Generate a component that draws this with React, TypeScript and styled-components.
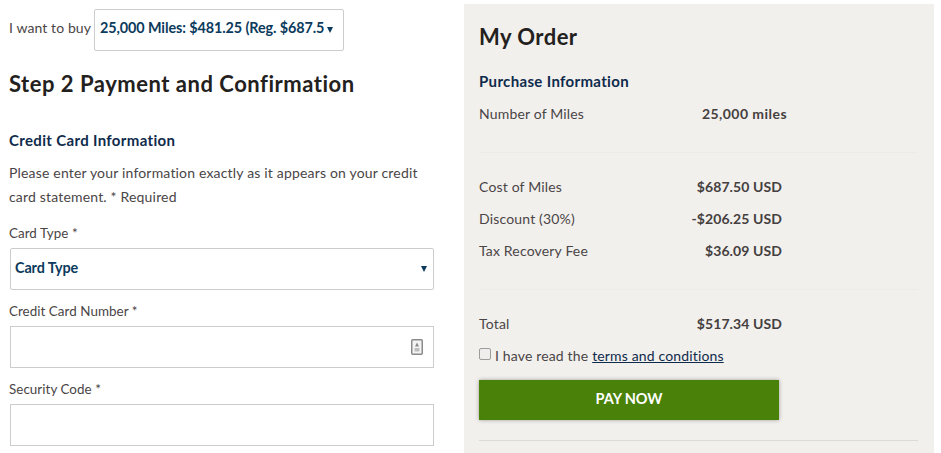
import React from "react";
import styled, { createGlobalStyle } from "styled-components";

const Global = createGlobalStyle`
  html, body { margin: 0; padding: 0; background: #fff; height: 453px; overflow: hidden; }
  body { font-family: Lato, "Open Sans", Arial, sans-serif; color: #4a4546; }
  * { box-sizing: border-box; }
`;

const Page = styled.div`
  display: flex;
  align-items: flex-start;
  width: 941px;
  height: 453px;
  overflow: hidden;
`;

const Left = styled.div`
  width: 464px;
  flex: none;
  padding: 9px 30px 0 9px;
`;

const BuyRow = styled.div`
  display: flex;
  align-items: center;
  gap: 3px;
  height: 42px;
  font-size: 14px;
  letter-spacing: 0.1px;
`;

const BuyLabel = styled.span`
  margin-bottom: 5px;
`;

const Arrow = styled.span`
  width: 0;
  height: 0;
  border-left: 3px solid transparent;
  border-right: 3px solid transparent;
  border-top: 6px solid #0b3a5c;
  flex: none;
`;

const SelectBox = styled.div<{ $full?: boolean }>`
  display: flex;
  align-items: ${(p) => (p.$full ? "center" : "flex-start")};
  justify-content: space-between;
  height: 42px;
  width: ${(p) => (p.$full ? "424px" : "250px")};
  margin-left: ${(p) => (p.$full ? "1px" : "0")};
  padding: ${(p) => (p.$full ? "0 6px 4px 4px" : "9px 10px 0 5px")};
  border: 1px solid #cccccc;
  border-radius: 2px;
  background: #fff;
  color: #0b3a5c;
  font-weight: 700;
  font-size: 14.4px;
  white-space: nowrap;
  overflow: hidden;
  ${Arrow} { margin-top: ${(p) => (p.$full ? "4px" : "8px")}; }
`;

const SelectText = styled.span`
  letter-spacing: -0.1px;
`;

const Heading = styled.h1`
  margin: 18px 0 0;
  font-size: 22px;
  line-height: 30px;
  font-weight: 700;
  color: #232020;
  letter-spacing: 0.52px;
`;

const SubHeading = styled.h2<{ $tight?: boolean }>`
  margin: ${(p) => (p.$tight ? "20px 0 0" : "31px 0 0")};
  font-size: 15px;
  line-height: 20px;
  font-weight: 700;
  color: #0f2b4c;
  letter-spacing: 0.34px;
`;

const Intro = styled.p`
  margin: 11px 0 0;
  font-size: 14px;
  line-height: 24px;
  letter-spacing: 0.18px;
`;

const Label = styled.div<{ $first?: boolean }>`
  margin-top: ${(p) => (p.$first ? "14px" : "11px")};
  height: 20px;
  font-size: 13.4px;
  line-height: 20px;
  letter-spacing: 0.05px;
`;

const FieldLabel = styled(Label)``;

const InputBox = styled.div`
  position: relative;
  height: 42px;
  width: 424px;
  margin: 5px 0 0 1px;
  border: 1px solid #cccccc;
  background: #fff;
`;

const SelectWrap = styled.div`
  margin-top: 5px;
`;

const CardIcon = styled.svg`
  position: absolute;
  right: 10px;
  top: 12px;
  width: 12px;
  height: 16px;
`;

const Panel = styled.div`
  width: 470px;
  height: 449px;
  margin-top: 4px;
  flex: none;
  background: #f2f0ed;
  padding: 19px 16px 0 15px;
`;

const PanelTitle = styled.h1`
  margin: 0;
  font-size: 22px;
  line-height: 28px;
  font-weight: 700;
  color: #232020;
  letter-spacing: 0.45px;
`;

const Row = styled.div<{ $wide?: boolean; $top?: number }>`
  display: flex;
  justify-content: space-between;
  align-items: center;
  width: ${(p) => (p.$wide ? "308px" : "303px")};
  height: 32px;
  font-size: 14px;
  letter-spacing: 0.17px;
  margin-top: ${(p) => p.$top ?? 0}px;
`;

const Value = styled.span<{ $loose?: boolean }>`
  font-weight: 700;
  color: #45403f;
  letter-spacing: ${(p) => (p.$loose ? "0.45px" : "0.1px")};
`;

const Divider = styled.hr<{ $strong?: boolean; $top: number }>`
  border: 0;
  height: 1px;
  margin: ${(p) => p.$top}px 0 0;
  background: ${(p) => (p.$strong ? "#dcdad7" : "#ecebe7")};
`;

const Terms = styled.label`
  display: flex;
  align-items: center;
  margin-top: 3px;
  height: 26px;
  font-size: 14px;
  letter-spacing: 0.15px;
`;

const Check = styled.input`
  appearance: none;
  width: 12px;
  height: 12px;
  margin: 0 4px 2px 0;
  border: 1px solid #9c9c9c;
  border-radius: 2px;
  background: #efeeec;
`;

const TermsLink = styled.a`
  color: #0f2b4c;
  text-decoration: underline;
  margin-left: 4px;
`;

const PayButton = styled.button`
  display: block;
  width: 300px;
  height: 40px;
  margin-top: 12px;
  padding: 0 0 4px;
  border: 0;
  background: #4a8209;
  color: #fff;
  font: 700 14.5px Lato, "Open Sans", Arial, sans-serif;
  letter-spacing: -0.1px;
  box-shadow: 0 0 4px rgba(0, 0, 0, 0.35);
`;

export default function App() {
  return (
    <Page>
      <Global />
      <Left>
        <BuyRow>
          <BuyLabel>I want to buy</BuyLabel>
          <SelectBox>
            <SelectText>25,000 Miles: $481.25 (Reg. $687.5</SelectText>
            <Arrow />
          </SelectBox>
        </BuyRow>
        <Heading>Step 2 Payment and Confirmation</Heading>
        <SubHeading>Credit Card Information</SubHeading>
        <Intro>
          Please enter your information exactly as it appears on your credit card statement. * Required
        </Intro>
        <Label $first>Card Type *</Label>
        <SelectWrap>
          <SelectBox $full>
            <SelectText>Card Type</SelectText>
            <Arrow />
          </SelectBox>
        </SelectWrap>
        <FieldLabel>Credit Card Number *</FieldLabel>
        <InputBox>
          <CardIcon viewBox="0 0 12 16">
            <rect x="0.75" y="0.75" width="10.5" height="14.5" rx="1" fill="#f4f4f4" stroke="#8a8a8a" strokeWidth="1.5" />
            <path d="M6 3.5 8 7.5H4Z" fill="#8a8a8a" />
            <rect x="3.5" y="9" width="5" height="3.5" fill="#bdbdbd" />
          </CardIcon>
        </InputBox>
        <FieldLabel>Security Code *</FieldLabel>
        <InputBox />
      </Left>
      <Panel>
        <PanelTitle>My Order</PanelTitle>
        <SubHeading $tight>Purchase Information</SubHeading>
        <Row $wide $top={6}>
          <span>Number of Miles</span>
          <Value $loose>25,000 miles</Value>
        </Row>
        <Divider $top={23} />
        <Row $top={17}>
          <span>Cost of Miles</span>
          <Value>$687.50 USD</Value>
        </Row>
        <Row>
          <span>Discount (30%)</span>
          <Value>-$206.25 USD</Value>
        </Row>
        <Row>
          <span>Tax Recovery Fee</span>
          <Value>$36.09 USD</Value>
        </Row>
        <Divider $top={23} />
        <Row $top={17}>
          <span>Total</span>
          <Value>$517.34 USD</Value>
        </Row>
        <Terms>
          <Check type="checkbox" />
          <span>I have read the</span>
          <TermsLink>terms and conditions</TermsLink>
        </Terms>
        <PayButton>PAY NOW</PayButton>
        <Divider $strong $top={20} />
      </Panel>
    </Page>
  );
}
